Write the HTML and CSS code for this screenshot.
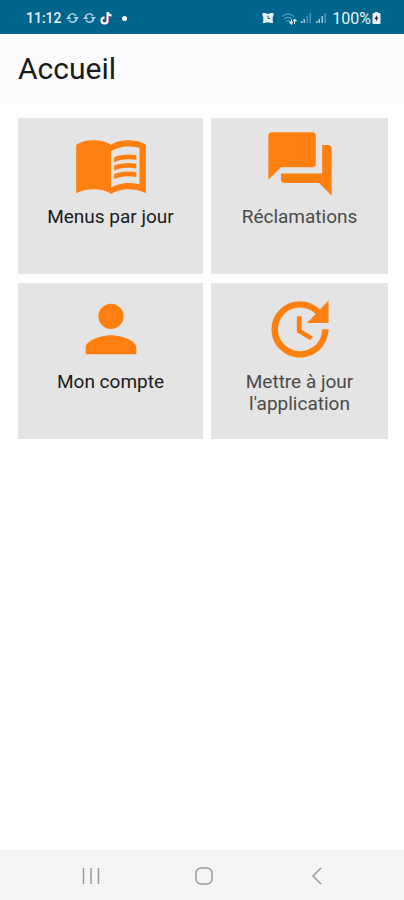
FILE: index.html
```html
<!DOCTYPE html>
<html lang="fr">
<head>
    <meta charset="UTF-8">
    <meta name="viewport" content="width=device-width, initial-scale=1.0">
    <title>Accueil</title>
    <link rel="stylesheet" href="styles.css">
</head>
<body>

<div class="status-bar">
    <div class="status-group">
        <span class="status-time">11:12</span>
        <svg class="sync" width="13" height="12" viewBox="0 0 13 12">
            <path d="M2.500 5a4 4 0 0 1 7.500-1M10.500 7a4 4 0 0 1-7.500 1"/>
            <path class="solid" d="M7.500 5h5.500l-2.500 3zM0 7h5.500L2.500 4z"/>
        </svg>
        <svg class="sync" width="13" height="12" viewBox="0 0 13 12">
            <path d="M2.500 5a4 4 0 0 1 7.500-1M10.500 7a4 4 0 0 1-7.500 1"/>
            <path class="solid" d="M7.500 5h5.500l-2.500 3zM0 7h5.500L2.500 4z"/>
        </svg>
        <svg class="tiktok" width="13" height="14" viewBox="0 0 13 14">
            <path class="note-red" d="M8 1v8.500a3 3 0 1 1-3-3M8 1c.3 2.500 2 3.500 4 3.700"/>
            <path class="note" d="M7.500 1v8.500a3 3 0 1 1-3-3M7.500 1c.3 2 2 3.200 4 3.400"/>
        </svg>
        <span class="dot"></span>
    </div>
    <div class="status-group status-right">
        <svg class="alarm" width="12" height="12" viewBox="0 0 12 12">
            <path d="M.500 1h3l1 .8h3l1-.8h3v3l-.8 1v3.500l.3 2.500H9l-1-.5H4l-1 .5H1l.3-2.500V5L.500 4z"/>
            <path class="hand" d="M6 3.500v3h2"/>
        </svg>
        <svg class="wifi" width="16" height="13" viewBox="0 0 16 13">
            <path d="M1 4.500q6-5 12 0M3 7q4-3.500 8 0M5 9.500q2-2 4 0"/>
            <path class="arrows" d="M10.500 12V7.500M8.500 10l2 2.500 1-2.500zM13.500 7v5M12.500 9l1-2 2 2z"/>
        </svg>
        <svg class="signal" width="12" height="12" viewBox="0 0 12 12">
            <path d="M1 9h1.500v2H1zM3.500 7H5v4H3.500z"/>
            <path class="weak" d="M6.500 4H8v7H6.500zM9.500 1H11v10H9.500z"/>
        </svg>
        <svg class="signal" width="12" height="12" viewBox="0 0 12 12">
            <path d="M1 9h1.500v2H1zM3.500 7H5v4H3.500zM6.500 4H8v7H6.500z"/>
            <path class="weak" d="M9.500 1H11v10H9.500z"/>
        </svg>
        <span class="battery-level">100%</span>
        <svg class="battery" width="9" height="12" viewBox="0 0 9 12">
            <path d="M3 0h3v1h1.500q1 0 1 1v9q0 1-1 1h-6q-1 0-1-1V2q0-1 1-1H3z"/>
            <path class="bolt" d="M5 3L2.500 7H4v2.500L6.500 5.500H5z"/>
        </svg>
    </div>
</div>

<header class="app-header">
    <h1>Accueil</h1>
</header>

<main class="tiles">
    <button class="tile">
        <svg viewBox="0 0 24 24">
            <path fill-rule="evenodd" d="M21 5c-1.110-.35-2.330-.5-3.500-.5-1.950 0-4.050.4-5.500 1.500-1.450-1.100-3.550-1.500-5.500-1.500S2.450 4.900 1 6v15.200C3 20.300 5 20 6.500 20c1.950 0 4.050.4 5.500 1.500 1.350-.85 3.800-1.500 5.500-1.500 1.900 0 3.900.4 5.500 1.200V6c-.6-.45-1.250-.75-2-1zm0 13.500c-1.100-.35-2.300-.5-3.500-.5-1.700 0-4.150.65-5.500 1.500V8c1.350-.85 3.800-1.500 5.500-1.500 1.200 0 2.400.15 3.500.5z"/>
            <path d="M17.500 10.500c.88 0 1.730.09 2.500.26V9.240c-.79-.15-1.640-.24-2.500-.24-1.700 0-3.240.29-4.500.83v1.660c1.130-.64 2.700-.99 4.500-.99zM13 12.490v1.660c1.130-.64 2.700-.99 4.500-.99.88 0 1.730.09 2.500.26V11.900c-.79-.15-1.640-.24-2.500-.24-1.700 0-3.240.3-4.500.83zM17.500 14.330c-1.700 0-3.240.29-4.500.83v1.660c1.130-.64 2.700-.99 4.500-.99.88 0 1.730.09 2.500.26v-1.520c-.79-.16-1.640-.24-2.500-.24z"/>
        </svg>
        <span>Menus par jour</span>
    </button>
    <button class="tile muted">
        <svg viewBox="0 0 24 24">
            <path d="M21 6h-2v9H6v2c0 .55.45 1 1 1h11l4 4V7c0-.55-.45-1-1-1zm-4 6V3c0-.55-.45-1-1-1H3c-.55 0-1 .45-1 1v14l4-4h10c.55 0 1-.45 1-1z"/>
        </svg>
        <span>Réclamations</span>
    </button>
    <button class="tile">
        <svg viewBox="0 0 24 24">
            <path d="M12 12c2.210 0 4-1.790 4-4s-1.790-4-4-4-4 1.790-4 4 1.790 4 4 4zm0 2c-2.670 0-8 1.340-8 4v2h16v-2c0-2.660-5.330-4-8-4z"/>
        </svg>
        <span>Mon compte</span>
    </button>
    <button class="tile muted">
        <svg viewBox="0 0 24 24">
            <path d="M21 10.120h-6.780l2.740-2.820c-2.730-2.700-7.150-2.800-9.880-.1-2.730 2.710-2.730 7.080 0 9.790s7.150 2.710 9.880 0C18.320 15.650 19 14.080 19 12.100h2c0 1.980-.88 4.550-2.640 6.290-3.510 3.480-9.210 3.480-12.720 0-3.500-3.470-3.530-9.110-.02-12.580s9.140-3.470 12.650 0L21 3v7.120zM12.500 8v4.250l3.500 2.080-.72 1.210L11 13V8h1.500z"/>
        </svg>
        <span>Mettre à jour l'application</span>
    </button>
</main>

<nav class="nav-bar">
    <button aria-label="Applications récentes">
        <svg width="18" height="18" viewBox="0 0 18 18"><path d="M1.500 1v16M9 1v16M16.500 1v16"/></svg>
    </button>
    <button aria-label="Écran d'accueil">
        <svg width="18" height="18" viewBox="0 0 18 18"><rect x="1" y="1" width="16" height="16" rx="5"/></svg>
    </button>
    <button aria-label="Retour">
        <svg width="18" height="18" viewBox="0 0 18 18"><path d="M13 1L5 9l8 8"/></svg>
    </button>
</nav>

</body>
</html>
```
FILE: styles.css
```css
* {
    box-sizing: border-box;
}

body {
    margin: 0;
    min-height: 100vh;
    display: flex;
    flex-direction: column;
    background-color: #ffffff;
    color: #1a1a1a;
    font-family: Roboto, sans-serif;
}

button {
    border: none;
    font-family: inherit;
    cursor: pointer;
}

/* Phone status bar */
.status-bar {
    height: 34px;
    padding: 2px 23px 0 26px;
    display: flex;
    align-items: center;
    justify-content: space-between;
    background-color: #00658c;
    color: #e6f3f8;
    font-size: 16px;
}

.status-group {
    display: flex;
    align-items: center;
    gap: 4px;
}

.status-right {
    gap: 3px;
}

.status-time {
    font-size: 14px;
    font-weight: 500;
}

.status-bar svg {
    fill: #e6f3f8;
}

.status-bar .sync {
    fill: none;
    stroke: #b5d8e5;
    stroke-width: 1.4;
}

.sync .solid {
    fill: #b5d8e5;
    stroke: none;
}

.status-bar .tiktok {
    fill: none;
    stroke-width: 2;
}

.note {
    stroke: #ffffff;
}

.note-red {
    stroke: #c03a66;
}

.dot {
    width: 5px;
    height: 5px;
    margin-left: 5px;
    border-radius: 50%;
    background-color: #ffffff;
}

.alarm {
    margin-right: 4px;
}

.alarm .hand {
    fill: none;
    stroke: #00658c;
}

.status-bar .wifi {
    fill: none;
    stroke: #6fb0c8;
}

.wifi .arrows {
    fill: #e6f3f8;
    stroke: #e6f3f8;
}

.status-bar .signal {
    fill: #a5cddd;
}

.signal .weak {
    fill: #4b95b3;
}

.battery .bolt {
    fill: #4a2530;
}

.battery-level {
    margin-left: 2px;
    margin-right: -2px;
}

/* Header */
.app-header {
    height: 70px;
    padding: 0 18px;
    display: flex;
    align-items: center;
    background-color: #fcfcff;
}

.app-header h1 {
    margin: 0;
    font-size: 30px;
    font-weight: 400;
    line-height: 36px;
}

/* Home tiles */
.tiles {
    flex: 1;
    display: grid;
    grid-template-columns: 185fr 177fr;
    grid-auto-rows: minmax(156px, auto);
    align-content: start;
    gap: 9px 8px;
    padding: 14px 16px 18px 18px;
}

.tile {
    padding: 8px 24px;
    display: flex;
    flex-direction: column;
    align-items: center;
    justify-content: flex-start;
    gap: 4px;
    background-color: #e4e4e4;
    color: #1a1a1a;
    font-size: 19px;
    line-height: 22px;
}

.tile.muted {
    color: #4a4a4a;
}

.tile svg {
    width: 76px;
    height: 76px;
    fill: #ff7f11;
}

/* System navigation */
.nav-bar {
    height: 50px;
    padding: 0 31px 0 34px;
    display: flex;
    align-items: center;
    background-color: #f5f5f7;
}

.nav-bar button {
    flex: 1;
    height: 100%;
    padding: 2px 0 0;
    display: flex;
    align-items: center;
    justify-content: center;
    background: none;
}

.nav-bar svg {
    fill: none;
    stroke: #999999;
    stroke-width: 1.5;
}
```
